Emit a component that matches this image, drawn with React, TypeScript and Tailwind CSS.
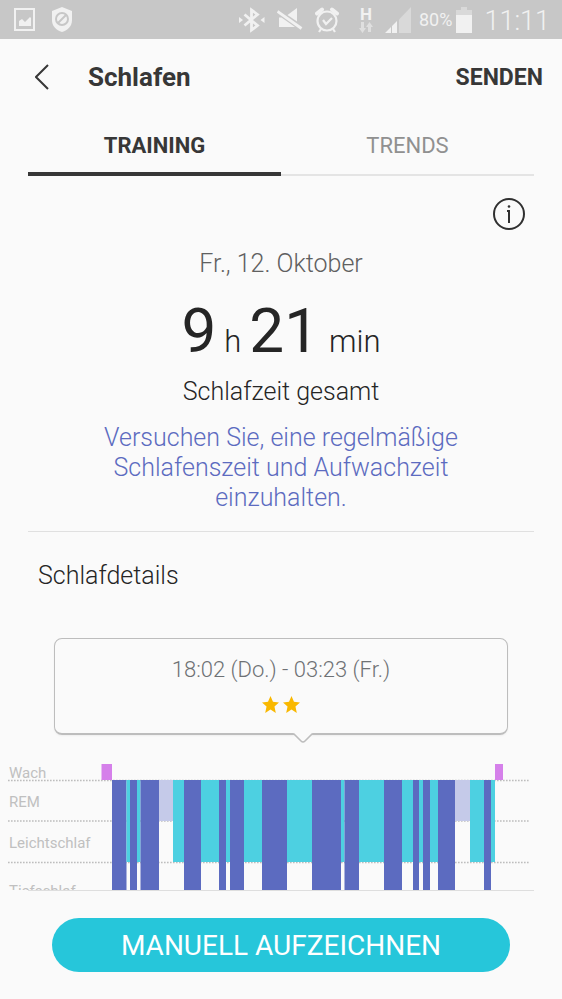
import { useState } from "react";

type Stage = "awake" | "rem" | "light" | "deep";

// [stage, start, end] along the night
const segments: [Stage, number, number][] = [
    ["awake", 93.5, 104],
    ["deep", 104, 118.5],
    ["light", 118.5, 122],
    ["deep", 122, 129],
    ["light", 129, 132.5],
    ["deep", 132.5, 151],
    ["rem", 151, 165],
    ["light", 165, 176],
    ["deep", 176, 193],
    ["light", 193, 211],
    ["deep", 211, 218],
    ["light", 218, 222],
    ["deep", 222, 236],
    ["light", 236, 254],
    ["deep", 254, 279],
    ["light", 279, 304],
    ["deep", 304, 333],
    ["light", 333, 336.5],
    ["deep", 336.5, 351],
    ["light", 351, 376],
    ["deep", 376, 394],
    ["light", 394, 405],
    ["deep", 405, 411],
    ["light", 411, 415],
    ["deep", 415, 422],
    ["light", 422, 430],
    ["deep", 430, 447],
    ["rem", 447, 462],
    ["light", 462, 476],
    ["deep", 476, 483],
    ["light", 483, 487],
    ["awake", 487, 495],
];

const stageStyle: Record<Stage, { fill: string; y: number; height: number }> = {
    awake: { fill: "#d580ea", y: 4, height: 16 },
    rem: { fill: "#c5cae9", y: 20, height: 41 },
    light: { fill: "#4dd0e1", y: 20, height: 82 },
    deep: { fill: "#5c6bc0", y: 20, height: 110 },
};

const gridLines = [20.5, 61, 102.5];

function StatusBar() {
    return (
        <div className="flex h-[39px] items-center justify-between bg-[#c7c7c7] pl-3.5 pr-3 text-[#f1f1f1]">
            <div className="flex items-center gap-4">
                <svg width="22" height="24" viewBox="0 0 22 24" fill="none">
                    <rect x="1" y="1" width="19" height="21" stroke="currentColor" strokeWidth="2" />
                    <path d="M5 18v-5l3-2 3 3 5-5 1 1v8z" fill="currentColor" />
                </svg>
                <svg width="20" height="25" viewBox="0 0 20 25" fill="none">
                    <path d="M10 0l10 4v9c0 6-4 10-10 12C4 23 0 19 0 13V4z" fill="currentColor" />
                    <circle cx="10" cy="12" r="6" stroke="#c7c7c7" strokeWidth="2" />
                    <path d="M6 16l8-8" stroke="#c7c7c7" strokeWidth="2" />
                </svg>
            </div>
            <div className="flex items-center">
                <svg width="26" height="26" viewBox="0 0 26 26" fill="none" className="mr-3">
                    <path d="M5.500 7.500l13 11-6 4.500V3l6 4.500-13 11" stroke="currentColor" strokeWidth="2.8" />
                    <path d="M0 10l4 3-4 3zM25.500 10l-4 3 4 3z" fill="currentColor" />
                </svg>
                <svg width="26" height="24" viewBox="0 0 26 24" fill="none" className="mr-3">
                    <path d="M10.500 7L20 0v13.500zM2 9.500h2.500l13.500 9.500H2z" fill="currentColor" />
                    <path d="M.5 3.500l24 17" stroke="currentColor" strokeWidth="2.800" />
                </svg>
                <svg width="24" height="26" viewBox="0 0 24 26" fill="none" className="mr-5">
                    <circle cx="12" cy="14" r="9.5" stroke="currentColor" strokeWidth="2.2" />
                    <path d="M8 13l3 4 6-6" stroke="currentColor" strokeWidth="2.2" />
                    <path d="M2 6.500l5-4M22 6.500l-5-4" stroke="currentColor" strokeWidth="4" strokeLinecap="round" />
                    <path d="M6 22l-2 3M18 22l2 3" stroke="currentColor" strokeWidth="2.2" />
                </svg>
                <div className="mr-3 flex flex-col items-center">
                    <span className="text-[17px] leading-4 font-bold">H</span>
                    <svg width="14" height="11" viewBox="0 0 14 11" fill="#dfdfdf">
                        <path d="M2 0h3v6h2l-3.500 5L0 6h2zM9 10h3V5h2l-3.500-5L7 5h2z" />
                    </svg>
                </div>
                <svg width="26" height="26" viewBox="0 0 26 26" className="mr-2">
                    <path d="M14 12.500L26 0v26H14z" fill="#d9d9d9" />
                    <path d="M0 26l6-6v6zM7 19l5-5v12H7z" fill="currentColor" />
                </svg>
                <span className="mr-1 text-[18px]">80%</span>
                <svg width="16" height="26" viewBox="0 0 16 26" className="mr-3">
                    <path d="M5 0h6v3h5v5H0V3h5z" fill="#d9d9d9" />
                    <path d="M0 8h16v18H0z" fill="currentColor" />
                </svg>
                <span className="pt-0.5 text-[27px] leading-9 font-[350]">11:11</span>
            </div>
        </div>
    );
}

function Tabs() {
    const [active, setActive] = useState("TRAINING");

    return (
        <div role="tablist" className="mx-7 flex">
            {["TRAINING", "TRENDS"].map((tab) => (
                <button
                    key={tab}
                    role="tab"
                    aria-selected={active === tab}
                    onClick={() => setActive(tab)}
                    className="flex h-[61px] flex-1 flex-col justify-end text-[22px]"
                >
                    <span className={active === tab ? "w-full pb-2.5 font-bold text-[#373737]" : "w-full pb-2.5 text-[#909090]"}>{tab}</span>
                    <span className="flex h-1 w-full items-end">
                        <span className={active === tab ? "h-1 w-full bg-[#373737]" : "h-0.5 w-full bg-[#e4e4e4]"} />
                    </span>
                </button>
            ))}
        </div>
    );
}

function SleepChart() {
    return (
        <div className="relative h-[130px] overflow-hidden text-[15px] leading-5 font-normal text-[#c0c0c0]">
            {/* Stage labels */}
            <div className="flex flex-col pl-px">
                <span className="pt-[3px]">Wach</span>
                <span className="pt-[9px]">REM</span>
                <span className="pt-[21px]">Leichtschlaf</span>
                <span className="pt-7">Tiefschlaf</span>
            </div>
            <svg className="absolute inset-0 h-full w-full" viewBox="0 0 521 130" preserveAspectRatio="none">
                {gridLines.map((y) => (
                    <path key={y} d={`M0 ${y}H521`} stroke="#bdbdbd" strokeWidth="1.600" strokeDasharray="1.600 1.400" />
                ))}
                {segments.map(([stage, start, end]) => (
                    <rect
                        key={start}
                        x={start}
                        y={stageStyle[stage].y}
                        width={end - start}
                        height={stageStyle[stage].height}
                        fill={stageStyle[stage].fill}
                    />
                ))}
            </svg>
        </div>
    );
}

export default function App() {
    return (
        <div className="flex min-h-screen flex-col bg-[#fafafa] font-['Roboto',sans-serif] text-[#252525]">
            <StatusBar />

            {/* Header */}
            <header className="flex h-[76px] items-center justify-between pr-[19px] pl-[31px] text-[#373737]">
                <div className="flex items-center gap-[35px]">
                    <button aria-label="Zurück" className="p-1">
                        <svg width="14" height="26" viewBox="0 0 14 26" fill="none" stroke="currentColor" strokeWidth="2">
                            <path d="M13 1L1 13l12 12" />
                        </svg>
                    </button>
                    <h1 className="text-[26px] font-bold">Schlafen</h1>
                </div>
                <button className="pt-0.5 text-[23px] font-bold">SENDEN</button>
            </header>

            <Tabs />

            {/* Summary */}
            <main className="flex flex-1 flex-col font-[350]">
                <section className="mx-7 flex flex-col items-center border-b border-[#e0e0e0] pb-[18px] text-center">
                    <button aria-label="Info" className="mt-[21px] mr-2 self-end text-[#303030]">
                        <svg width="34" height="34" viewBox="0 0 34 34" fill="none" stroke="currentColor" strokeWidth="2">
                            <circle cx="17" cy="17" r="15" />
                            <path d="M15 14h2v12" />
                            <circle cx="17" cy="9.500" r="1.300" fill="currentColor" stroke="none" />
                        </svg>
                    </button>
                    <p className="mt-[17px] text-[25px] leading-8 text-[#606060]">Fr., 12. Oktober</p>
                    <p className="mt-[18px] flex items-baseline text-[31px] leading-[66px]">
                        <span className="text-[62px] font-normal">9</span>
                        <span className="ml-2">h</span>
                        <span className="ml-2 text-[62px] font-normal">21</span>
                        <span className="ml-2.5">min</span>
                    </p>
                    <p className="mt-px text-[25px] leading-8">Schlafzeit gesamt</p>
                    <p className="mt-[15px] max-w-[380px] text-[25px] leading-[30px] text-[#5c6bc0]">
                        Versuchen Sie, eine regelmäßige Schlafenszeit und Aufwachzeit einzuhalten.
                    </p>
                </section>

                {/* Details */}
                <section className="flex flex-col">
                    <h2 className="mt-7 ml-[38px] text-[25px] leading-8">Schlafdetails</h2>
                    <div className="relative mx-[54px] mt-[46px] flex h-[97px] flex-col items-center rounded-lg border border-b-2 border-[#bdbdbd] pt-[17px] shadow-xs">
                        <p className="text-[22px] leading-7 text-[#6e7174]">18:02 (Do.) - 03:23 (Fr.)</p>
                        <div className="mt-3 flex gap-1 text-[#f9b800]">
                            {[1, 2].map((star) => (
                                <svg key={star} width="17" height="17" viewBox="0 0 24 24" fill="currentColor">
                                    <path d="M12 0l3.500 8.200L24 9l-6.400 5.800L19.500 24 12 19.200 4.500 24l1.900-9.200L0 9l8.500-.8z" />
                                </svg>
                            ))}
                        </div>
                        <svg className="absolute top-[94px] left-[237px]" width="22" height="12" viewBox="0 0 22 12" fill="none">
                            <path d="M1 0h20l-8 8q-2 2-4 0z" fill="#fafafa" />
                            <path d="M0 1h2l7 7q2 2 4 0l7-7h2" stroke="#bdbdbd" strokeWidth="1.600" />
                        </svg>
                    </div>
                    <div className="mt-[25px] mr-[33px] ml-2">
                        <SleepChart />
                    </div>
                    <div className="mx-7 h-px bg-[#dedede]" />
                </section>
            </main>

            <footer className="px-[52px] pt-[27px] pb-7">
                <button className="h-[54px] w-full rounded-full bg-[#26c6da] pt-0.5 text-[28px] text-white">MANUELL AUFZEICHNEN</button>
            </footer>
        </div>
    );
}
